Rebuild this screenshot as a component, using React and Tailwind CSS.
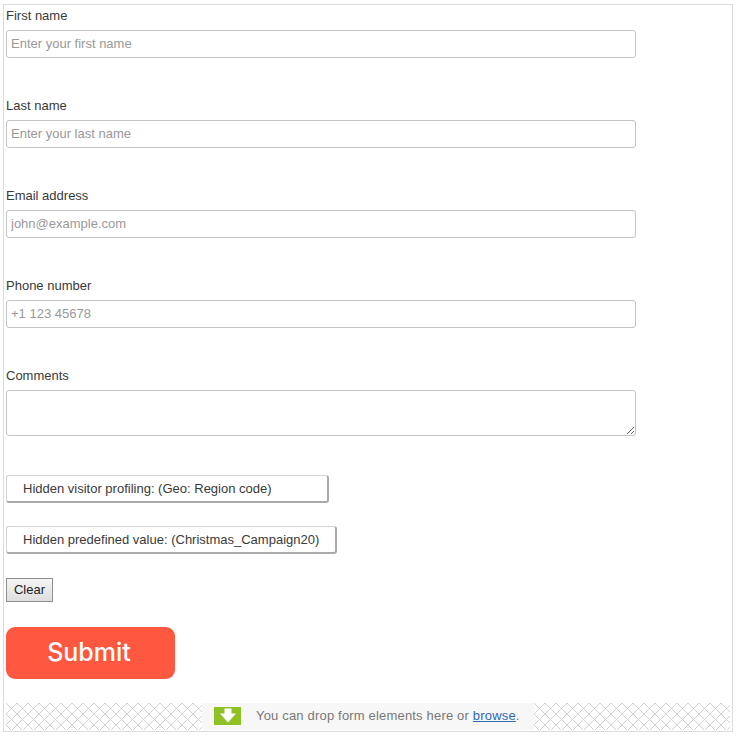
import { useId } from 'react';

const fields = [
  { label: 'First name', placeholder: 'Enter your first name' },
  { label: 'Last name', placeholder: 'Enter your last name' },
  { label: 'Email address', placeholder: 'john@example.com' },
  { label: 'Phone number', placeholder: '+1 123 45678' },
];

const dots = [0, 1, 2, 3, 4, 5, 6, 7, 8, 9, 10];

function Hatch() {
  const id = useId();
  return (
    <svg className="h-full flex-1" aria-hidden="true">
      <defs>
        <pattern id={id} width="11" height="11" patternUnits="userSpaceOnUse">
          {dots.map((i) => (
            <g key={i} fill="#d2d2d2">
              <rect x={i} y={i} width="1" height="1" />
              <rect x={10 - i} y={i} width="1" height="1" />
            </g>
          ))}
        </pattern>
      </defs>
      <rect width="100%" height="100%" fill={`url(#${id})`} />
    </svg>
  );
}

export default function App() {
  return (
    <div className="h-[736px] bg-white pt-1 pl-[3px] pr-[5px] pb-1 font-['Liberation_Sans',Arial,sans-serif] text-[#3a3a3a]">
      <div className="h-[728px] border border-[#dcdcdc] px-0.5 flex flex-col">
        {fields.map((f) => (
          <div key={f.label} className="h-[90px] shrink-0">
            <label className="block h-[25px] pt-[3px] text-[13px] leading-[15px]">{f.label}</label>
            <input
              readOnly
              placeholder={f.placeholder}
              className="block w-[630px] h-7 px-1 pb-0.5 border border-[#c4c4c4] rounded-[3px] text-[13px] font-['Liberation_Sans',Arial,sans-serif] bg-white placeholder:text-[#999999] outline-none"
            />
          </div>
        ))}

        <div className="h-[110px] shrink-0">
          <label className="block h-[25px] pt-[3px] text-[13px] leading-[15px]">Comments</label>
          <textarea readOnly className="block w-[630px] h-[46px] border border-[#c4c4c4] rounded-[3px] bg-white outline-none" />
        </div>

        <div className="h-[28px] w-[323px] shrink-0 pl-[16px] flex items-center border border-[#d4d4d4] border-r-2 border-b-2 border-r-[#aaaaaa] border-b-[#aaaaaa] rounded-[3px] text-[13px]">
          Hidden visitor profiling: (Geo: Region code)
        </div>
        <div className="mt-[23px] h-[28px] w-[331px] shrink-0 pl-[16px] flex items-center border border-[#d4d4d4] border-r-2 border-b-2 border-r-[#aaaaaa] border-b-[#aaaaaa] rounded-[3px] text-[13px]">
          Hidden predefined value: (Christmas_Campaign20)
        </div>

        <button className="mt-6 h-[24px] w-[47px] shrink-0 border border-[#8f8f8f] bg-gradient-to-b from-[#f5f5f5] to-[#dedede] text-[13px] text-[#222222]">
          Clear
        </button>

        <button className="mt-[25px] h-[52px] w-[169px] shrink-0 rounded-[9px] bg-[#ff5841] pr-[3px] text-white text-[25px] font-medium font-['Inter',sans-serif]">
          Submit
        </button>

        <div className="mt-6 h-[27px] shrink-0 flex text-[13px] tracking-[0.18px] text-[#777777]">
          <Hatch />
          <div className="w-[332px] h-full bg-[#f7f7f7] flex items-center pl-3 pb-0.5">
            <svg width="27" height="18" viewBox="0 0 27 18" className="shrink-0">
              <rect width="27" height="18" fill="#8fc126" />
              <path d="M10.5 1.5h7v5H22l-8 9-8-9h4.5z" fill="#ffffff" />
            </svg>
            <span className="ml-[15px]">
              You can drop form elements here or <a href="#" className="text-[#2f68b7] underline">browse</a>.
            </span>
          </div>
          <Hatch />
        </div>
      </div>
    </div>
  );
}
